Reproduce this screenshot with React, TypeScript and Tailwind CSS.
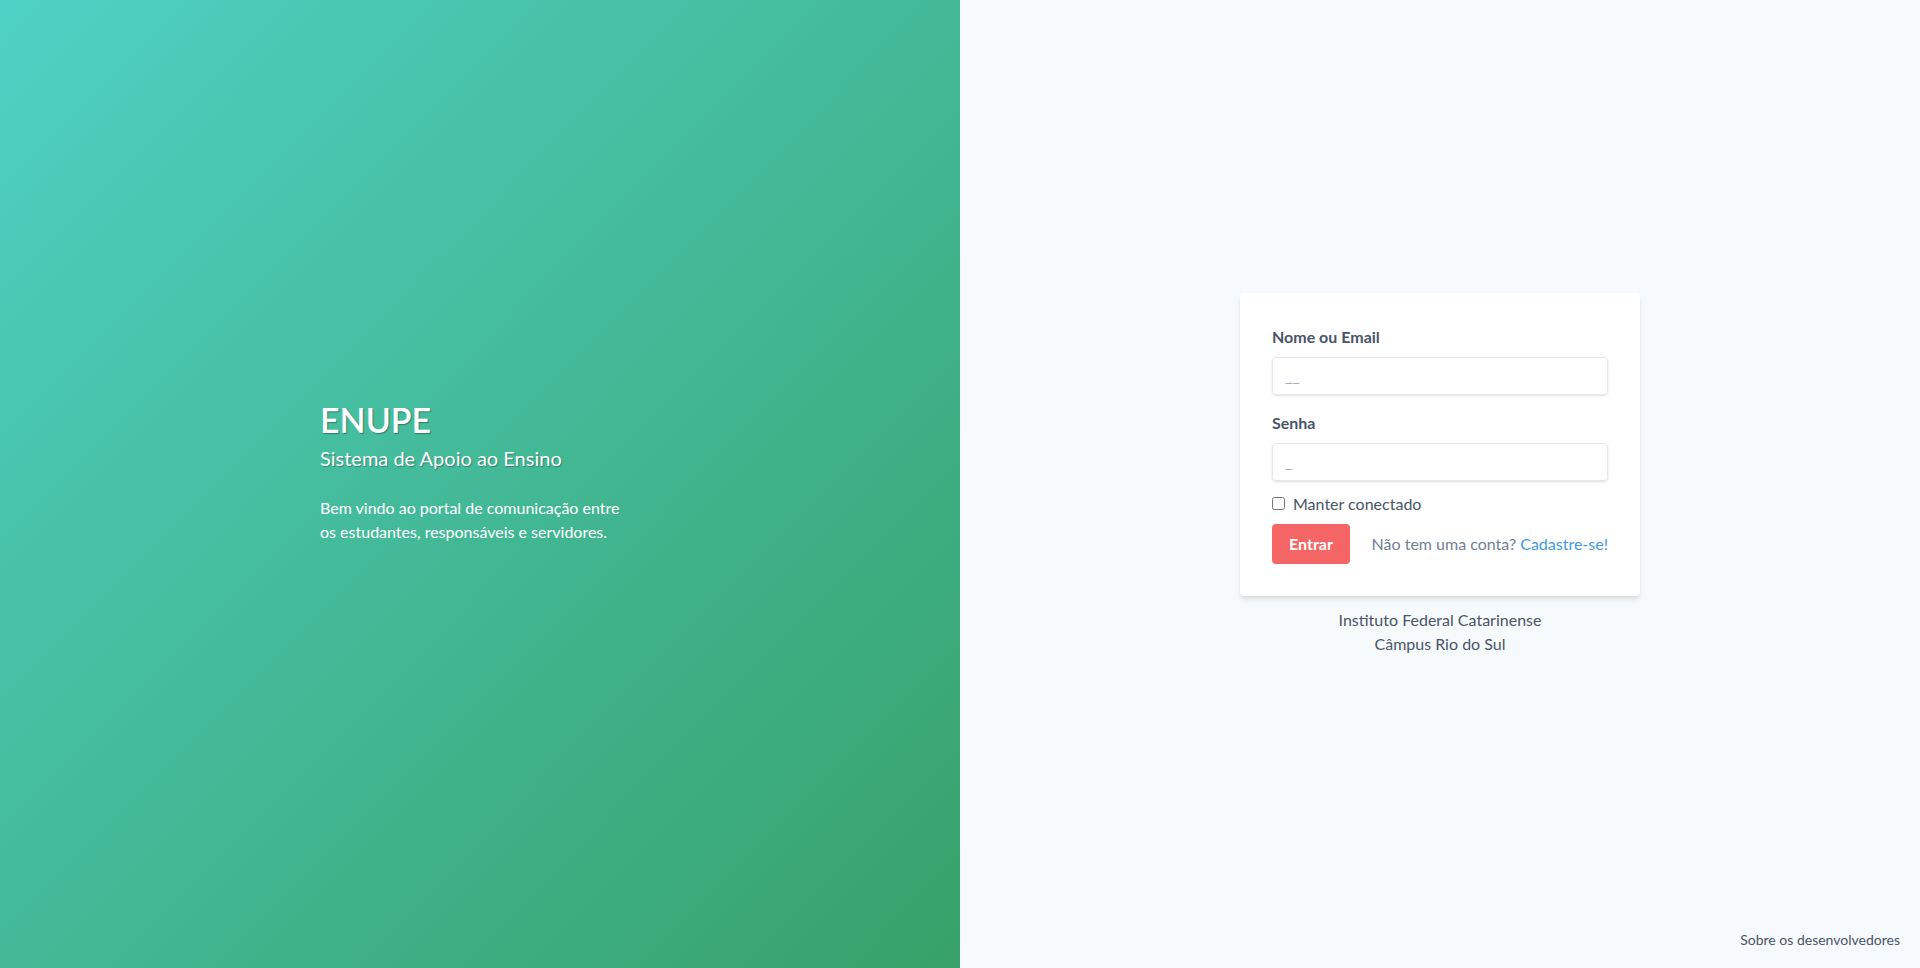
import React from 'react';

const font = { fontFamily: 'Lato, "Noto Sans", sans-serif' };

const App: React.FC = () => {
  return (
    <div className="flex h-screen w-full" style={font}>
      {/* Left side */}
      <div className="w-1/2 flex items-center justify-center bg-gradient-to-br from-[#4fd1c5] to-[#38a169] text-white">
        <div className="w-80 -mt-6">
          <h1 className="text-[34px] font-semibold leading-10 [text-shadow:1px_1px_1px_rgba(0,0,0,0.35)]">ENUPE</h1>
          <h2 className="text-xl leading-7 mt-1 [text-shadow:1px_1px_1px_rgba(0,0,0,0.3)]">
            Sistema de Apoio ao Ensino
          </h2>
          <p className="mt-6 max-w-[305px] text-base leading-6">
            Bem vindo ao portal de comunicação entre os estudantes, responsáveis e servidores.
          </p>
        </div>
      </div>

      {/* Right side */}
      <div className="relative w-1/2 flex flex-col items-center justify-center bg-[#f7fafc] pb-5">
        <form className="w-[400px] bg-white rounded shadow-md px-8 pt-8 pb-8">
          <label className="block text-base font-bold text-[#4a5568] leading-6 mb-2">Nome ou Email</label>
          <input
            type="text"
            placeholder="__"
            className="block w-full h-[38px] px-3 border border-[#e2e8f0] rounded shadow text-[#4a5568] placeholder:text-[#a0aec0] outline-none mb-4"
          />
          <label className="block text-base font-bold text-[#4a5568] leading-6 mb-2">Senha</label>
          <input
            type="password"
            placeholder="_"
            className="block w-full h-[38px] px-3 border border-[#e2e8f0] rounded shadow text-[#4a5568] placeholder:text-[#a0aec0] outline-none"
          />
          <div className="flex items-center gap-2 mt-[11px] leading-6 text-[#4a5568]">
            <input type="checkbox" className="w-[13px] h-[13px]" />
            <span>Manter conectado</span>
          </div>
          <div className="flex items-center justify-between mt-[8px]">
            <button
              type="button"
              className="h-10 w-[78px] rounded bg-[#f56565] text-white font-bold"
            >
              Entrar
            </button>
            <span className="text-[#718096]">
              Não tem uma conta? <a className="text-[#4299e1]">Cadastre-se!</a>
            </span>
          </div>
        </form>
        <div className="mt-3 text-center leading-6 text-[#4a5568]">
          <p>Instituto Federal Catarinense</p>
          <p>Câmpus Rio do Sul</p>
        </div>
        <a className="absolute bottom-[18px] right-5 text-sm text-[#4a5568]">Sobre os desenvolvedores</a>
      </div>
    </div>
  );
};

export default App;
